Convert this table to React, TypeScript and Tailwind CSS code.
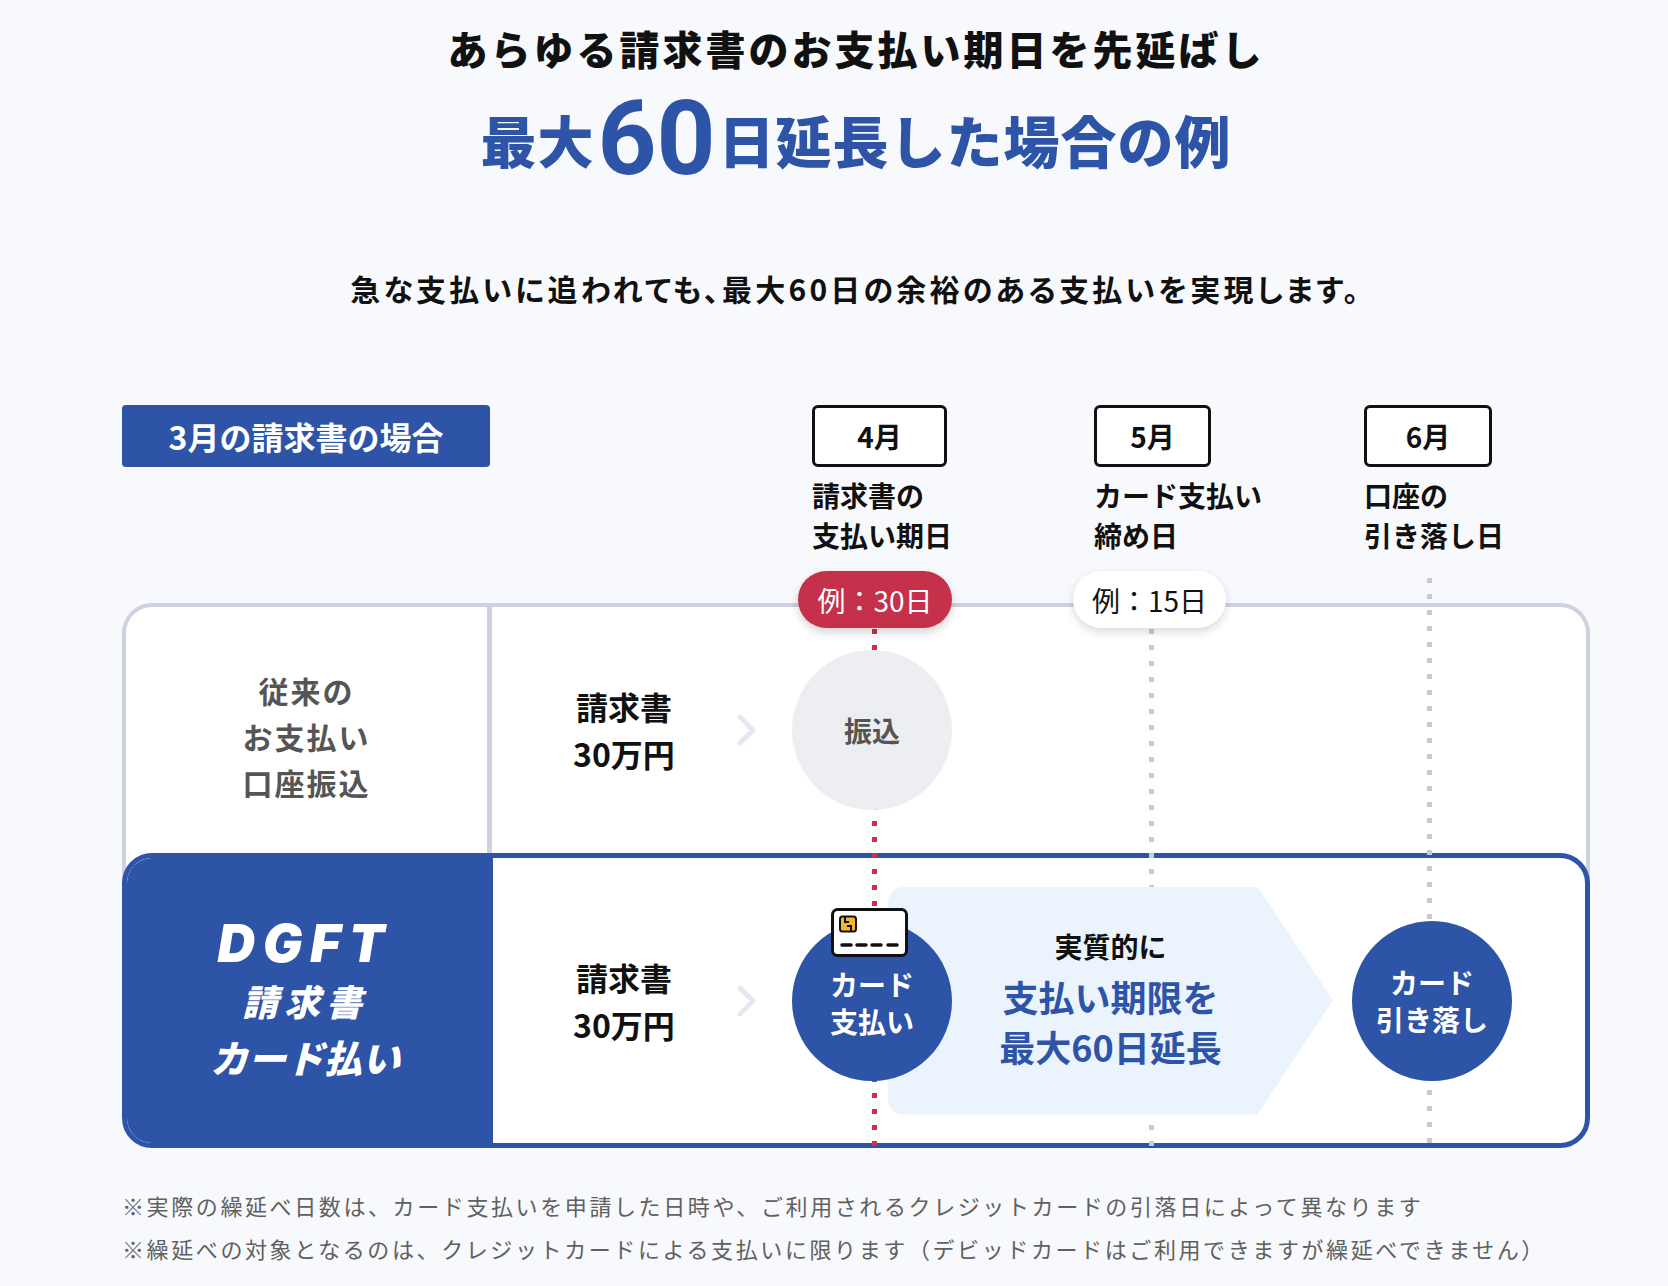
import React from "react";

function Chevron({ className = "" }: { className?: string }) {
  return (
    <svg className={className} width="20" height="32" viewBox="0 0 20 32" fill="none">
      <polyline points="3,3 16,16 3,29" stroke="#e4e8f0" strokeWidth="5" strokeLinecap="round" strokeLinejoin="round" />
    </svg>
  );
}

function CardIcon() {
  return (
    <svg className="absolute -top-[13px] left-[39px]" width="77" height="49" viewBox="0 0 77 49" fill="none">
      <rect x="1.5" y="1.5" width="74" height="46" rx="5" fill="#fff" stroke="#111" strokeWidth="3" />
      <rect x="9" y="8.5" width="16" height="15" rx="2.5" fill="#f4b62f" stroke="#111" strokeWidth="2" />
      <path d="M14 9 V14 H18 M20 23 V18 H16" stroke="#111" strokeWidth="2" />
      <path d="M11 37 H20 M26 37 H35 M41 37 H50 M57 37 H66" stroke="#111" strokeWidth="3.5" strokeLinecap="round" />
    </svg>
  );
}

function DotLine({ className, color, height }: { className: string; color: string; height: number }) {
  return (
    <svg className={className} width="5" height={height} viewBox={`0 0 5 ${height}`}>
      <line x1="2.5" y1="0" x2="2.5" y2={height} stroke={color} strokeWidth="5" strokeDasharray="5 11" />
    </svg>
  );
}

function MonthCol({ colW, boxW, month, l1, l2 }: { colW: string; boxW: string; month: string; l1: string; l2: string }) {
  return (
    <div className={colW}>
      <div className={`${boxW} flex h-[62px] items-center justify-center rounded-[6px] border-[3px] border-[#111] bg-white text-[28px] font-bold`}>
        {month}
      </div>
      <div className="mt-[8px] text-[28px] font-bold leading-[40px]">
        <div>{l1}</div>
        <div>{l2}</div>
      </div>
    </div>
  );
}

export default function App() {
  return (
    <div className="min-h-[1286px] w-full bg-[#f7f9fc] font-['Noto_Sans_CJK_JP',sans-serif] text-[#111]">
      <div className="ml-[122px] w-[1468px] pt-[20px]">
        <h1 className="text-center text-[40px] font-black leading-[56px] tracking-[3px]">
          あらゆる請求書のお支払い期日を先延ばし
        </h1>
        <h2 className="mt-[25px] text-center text-[56px] font-black leading-[76px] tracking-[1px] text-[#2e54a8]">
          最大
          <span className="mx-[3px] font-['Roboto',sans-serif] text-[103px] font-bold leading-[0] tracking-[0px] align-[-11px]">60</span>
          日延長した場合の例
        </h2>
        <p className="mt-[91px] text-center text-[30px] font-bold leading-[40px] tracking-[3.2px] [font-feature-settings:'palt']">
          急な支払いに追われても、最大60日の余裕のある支払いを実現します。
        </p>

        <div className="relative mt-[97px]">
          {/* header */}
          <div className="flex">
            <div className="w-[690px]">
              <div className="flex h-[62px] w-[368px] items-center justify-center rounded-[4px] bg-[#2e54a8] text-[32px] font-bold text-white">
                3月の請求書の場合
              </div>
            </div>
            <MonthCol colW="w-[282px]" boxW="w-[135px]" month="4月" l1="請求書の" l2="支払い期日" />
            <MonthCol colW="w-[270px]" boxW="w-[117px]" month="5月" l1="カード支払い" l2="締め日" />
            <MonthCol colW="w-[226px]" boxW="w-[128px]" month="6月" l1="口座の" l2="引き落し日" />
          </div>

          {/* badges */}
          <div className="relative z-30 mt-[16px] flex h-[57px]">
            <div className="ml-[676px] flex w-[154px] items-center justify-center rounded-full bg-[#c5304a] text-[28px] text-white shadow-[0_4px_10px_rgba(0,0,0,0.18)]">
              例：30日
            </div>
            <div className="ml-[121px] flex w-[153px] items-center justify-center rounded-full bg-white text-[28px] shadow-[0_4px_10px_rgba(0,0,0,0.15)]">
              例：15日
            </div>
          </div>

          {/* row 1 */}
          <div className="-mt-[25px] rounded-t-[30px] border-4 border-b-0 border-[#cfd1e1] bg-white">
            <div className="flex h-[246px]">
              <div className="flex w-[366px] items-center justify-center border-r-[5px] border-[#cfd1e1] pt-[12px] text-center text-[30px] font-bold leading-[46px] tracking-[2px] text-[#555]">
                <div>
                  <div>従来の</div>
                  <div>お支払い</div>
                  <div>口座振込</div>
                </div>
              </div>
              <div className="flex flex-1 items-center">
                <div className="ml-[32px] w-[200px] text-center text-[32px] font-bold leading-[47px]">
                  <div>請求書</div>
                  <div>30万円</div>
                </div>
                <Chevron className="ml-[13px]" />
                <div className="relative z-20 ml-[35px] flex h-[160px] w-[160px] items-center justify-center rounded-full bg-[#eceef2] text-[28px] font-bold text-[#555]">
                  振込
                </div>
              </div>
            </div>
            <div className="h-[30px]" />
          </div>

          {/* row 2 */}
          <div className="relative -mt-[30px] flex h-[295px] rounded-[30px] border-[5px] border-[#2e54a8] bg-white">
            <div className="flex w-[366px] flex-col items-center justify-center rounded-l-[25px] bg-[#2e54a8] pr-[10px] text-white italic">
              <div className="font-['Inter',sans-serif] text-[52px] font-black leading-[56px] tracking-[8px]">DGFT</div>
              <div className="text-[36px] font-black leading-[56px] tracking-[6px]">請求書</div>
              <div className="text-[38px] font-black leading-[58px]">カード払い</div>
            </div>
            <div className="flex flex-1 items-center">
              <div className="ml-[31px] w-[200px] text-center text-[32px] font-bold leading-[47px]">
                <div>請求書</div>
                <div>30万円</div>
              </div>
              <Chevron className="ml-[13px]" />
              <div className="relative z-20 ml-[35px] flex h-[160px] w-[160px] shrink-0 items-center justify-center rounded-full bg-[#2e54a8] text-center text-[28px] font-bold leading-[37px] text-white">
                <CardIcon />
                <div className="pt-[4px]">
                  <div>カード</div>
                  <div>支払い</div>
                </div>
              </div>
              <div className="relative z-[15] -ml-[64px] flex h-[228px] w-[445px] shrink-0 flex-col items-center justify-center rounded-l-[16px] bg-[#ebf3fc] pb-[10px] text-center font-bold [clip-path:polygon(0_0,83%_0,100%_50%,83%_100%,0_100%)]">
                <div className="text-[28px] leading-[50px]">実質的に</div>
                <div className="text-[36px] leading-[50px] text-[#2e54a8]">支払い期限を</div>
                <div className="text-[36px] leading-[50px] text-[#2e54a8]">最大60日延長</div>
              </div>
              <div className="relative z-20 ml-[19px] flex h-[160px] w-[160px] shrink-0 items-center justify-center rounded-full bg-[#2e54a8] text-center text-[28px] font-bold leading-[37px] text-white">
                <div>
                  <div>カード</div>
                  <div>引き落し</div>
                </div>
              </div>
            </div>
          </div>

          {/* timeline lines */}
          <DotLine className="pointer-events-none absolute left-[750px] top-[224px] z-10" color="#c8334b" height={519} />
          <DotLine className="pointer-events-none absolute left-[1027px] top-[224px] z-10" color="#c9cad9" height={519} />
          <DotLine className="pointer-events-none absolute left-[1305px] top-[173px] z-10" color="#c9cad9" height={570} />
        </div>

        <div className="mt-[36px] text-[22px] leading-[43px] tracking-[2.6px] text-[#606060]">
          <p>※実際の繰延べ日数は、カード支払いを申請した日時や、ご利用されるクレジットカードの引落日によって異なります</p>
          <p>※繰延べの対象となるのは、クレジットカードによる支払いに限ります（デビッドカードはご利用できますが繰延べできません）</p>
        </div>
      </div>
    </div>
  );
}
